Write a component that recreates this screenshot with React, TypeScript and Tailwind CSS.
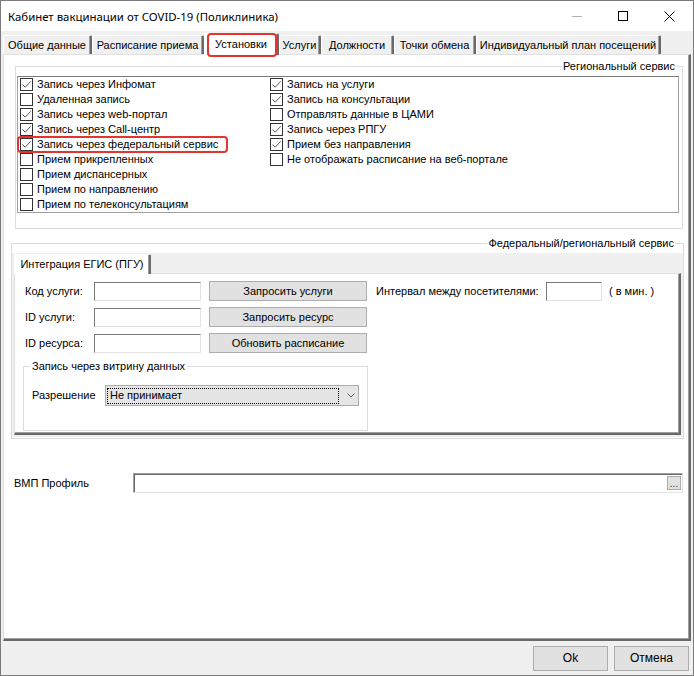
import React from 'react';

type Item = { label: string; checked: boolean; marked?: boolean };

const leftItems: Item[] = [
  { label: 'Запись через Инфомат', checked: true },
  { label: 'Удаленная запись', checked: false },
  { label: 'Запись через web-портал', checked: true },
  { label: 'Запись через Call-центр', checked: true },
  { label: 'Запись через федеральный сервис', checked: true, marked: true },
  { label: 'Прием прикрепленных', checked: false },
  { label: 'Прием диспансерных', checked: false },
  { label: 'Прием по направлению', checked: false },
  { label: 'Прием по телеконсультациям', checked: false },
];

const rightItems: Item[] = [
  { label: 'Запись на услуги', checked: true },
  { label: 'Запись на консультации', checked: true },
  { label: 'Отправлять данные в ЦАМИ', checked: false },
  { label: 'Запись через РПГУ', checked: true },
  { label: 'Прием без направления', checked: true },
  { label: 'Не отображать расписание на веб-портале', checked: false },
];

const tabs = [
  { label: 'Общие данные', width: 'w-[89px]' },
  { label: 'Расписание приема', width: 'w-[112px]' },
  { label: 'Установки', width: 'w-[75px]', active: true },
  { label: 'Услуги', width: 'w-[42px]' },
  { label: 'Должности', width: 'w-[73px]' },
  { label: 'Точки обмена', width: 'w-[82px]' },
  { label: 'Индивидуальный план посещений', width: 'w-[185px]' },
];

const CheckBox: React.FC<{ checked: boolean }> = ({ checked }) => (
  <span className="flex h-[13px] w-[13px] shrink-0 items-center justify-center border border-[#333333] bg-white">
    {checked && (
      <svg width="11" height="11" viewBox="0 0 11 11">
        <path d="M1.5 5.5 L4.2 8.2 L9.8 2.3" fill="none" stroke="#5a5a5a" strokeWidth="1" />
      </svg>
    )}
  </span>
);

const CheckRow: React.FC<{ item: Item }> = ({ item }) => (
  <div className="relative flex h-[15px] items-center gap-[4px]">
    <CheckBox checked={item.checked} />
    <span className="whitespace-nowrap">{item.label}</span>
    {item.marked && (
      <span className="pointer-events-none absolute -left-[3px] -top-[1px] h-[17px] w-[211px] rounded-[4px] border-2 border-[#e3342f]" />
    )}
  </div>
);

const TextBox: React.FC<{ className?: string }> = ({ className }) => (
  <input
    type="text"
    readOnly
    className={`h-[19px] border border-b-[#e3e3e3] border-l-[#7a7a7a] border-r-[#e3e3e3] border-t-[#7a7a7a] bg-white outline-none ${className ?? ''}`}
  />
);

const WinButton: React.FC<{ label: string; className?: string }> = ({ label, className }) => (
  <button
    type="button"
    className={`flex items-center justify-center border border-[#adadad] bg-[#e1e1e1] text-black ${className ?? ''}`}
  >
    {label}
  </button>
);

export default function App() {
  return (
    <div className="flex h-[676px] w-[694px] flex-col border border-[#7a7a7a] bg-[#f0f0f0] font-['Liberation_Sans',Arial,sans-serif] text-[11px] leading-[13px] text-black">
      {/* Заголовок окна */}
      <div className="flex h-[30px] shrink-0 items-center bg-white pl-[7px] pr-[1px]">
        <span className="font-['Noto_Sans',sans-serif] text-[11.4px]">Кабинет вакцинации от COVID-19 (Поликлиника)</span>
        <div className="ml-auto flex h-full">
          <div className="flex w-[46px] items-center justify-center">
            <svg width="10" height="10" viewBox="0 0 10 10">
              <path d="M0 5.5 H10" stroke="#b0b0b0" strokeWidth="1" />
            </svg>
          </div>
          <div className="flex w-[46px] items-center justify-center">
            <svg width="10" height="10" viewBox="0 0 10 10">
              <rect x="0.5" y="0.5" width="9" height="9" fill="none" stroke="#000" strokeWidth="1" />
            </svg>
          </div>
          <div className="flex w-[46px] items-center justify-center">
            <svg width="11" height="11" viewBox="0 0 11 11">
              <path d="M0.5 0.5 L10.5 10.5 M10.5 0.5 L0.5 10.5" stroke="#000" strokeWidth="1" />
            </svg>
          </div>
        </div>
      </div>

      <div className="flex flex-1 flex-col px-[2px] pt-[2px]">
        {/* Вкладки */}
        <div className="flex h-[21px] items-end">
          {tabs.map(t =>
            t.active ? (
              <div
                key={t.label}
                className={`relative z-10 -mb-[1px] flex h-[22px] items-center justify-center rounded-t-[2px] border-l border-r-2 border-t border-l-white border-r-[#696969] border-t-white bg-white shadow-[inset_-1px_0_0_#a0a0a0] ${t.width}`}
              >
                {t.label}
                <span className="pointer-events-none absolute -bottom-[2px] left-[2px] right-0 -top-[1px] rounded-[4px] border-2 border-[#e3342f]" />
              </div>
            ) : (
              <div
                key={t.label}
                className={`flex h-[19px] items-center justify-center rounded-t-[2px] border-l border-r-2 border-t border-l-white border-r-[#696969] border-t-white bg-[#f0f0f0] shadow-[inset_-1px_0_0_#a0a0a0] ${t.width}`}
              >
                {t.label}
              </div>
            )
          )}
        </div>

        {/* Страница «Установки» */}
        <div className="flex flex-1 flex-col border-b-2 border-l border-r-2 border-t border-b-[#696969] border-l-[#e0e0e0] border-r-[#696969] border-t-[#e0e0e0] bg-white shadow-[inset_-1px_-1px_0_#a0a0a0]">
          <fieldset className="ml-[11px] mr-[6px] mt-[5px] border border-[#dcdcdc] px-0 pb-[15px]">
            <legend className="ml-auto mr-[6px] px-[1px] leading-[13px]">Региональный сервис</legend>
            <div className="ml-[1px] mr-[3px] mt-[3px] flex border border-[#a0a0a0] border-t-[#7a7a7a] pl-[2px]">
              <div className="flex w-[250px] flex-col">
                {leftItems.map(i => (
                  <CheckRow key={i.label} item={i} />
                ))}
              </div>
              <div className="flex flex-col">
                {rightItems.map(i => (
                  <CheckRow key={i.label} item={i} />
                ))}
              </div>
            </div>
          </fieldset>

          <fieldset className="ml-[7px] mr-[5px] mt-[8px] border border-[#dcdcdc] pb-[1px]">
            <legend className="ml-auto mr-[8px] px-[1px] leading-[13px]">Федеральный/региональный сервис</legend>
            <div className="mt-[3px] flex flex-col bg-[#f0f0f0] pb-[2px]">
              <div className="flex h-[20px] items-end pl-[2px]">
                <div className="relative z-10 -mb-[1px] flex h-[20px] w-[137px] items-center justify-center rounded-t-[2px] border-l border-r-2 border-t border-l-white border-r-[#696969] border-t-white bg-white shadow-[inset_-1px_0_0_#a0a0a0]">
                  Интеграция ЕГИС (ПГУ)
                </div>
              </div>
              <div className="mx-[2px] flex flex-col border-b-2 border-l border-r-2 border-t border-b-[#696969] border-l-[#e0e0e0] border-r-[#696969] border-t-[#e0e0e0] bg-white pb-[2px] pl-[8px] pt-[7px] shadow-[inset_-1px_-1px_0_#a0a0a0]">
                <div className="flex flex-col gap-[6px] pl-[2px]">
                  <div className="flex h-[20px] items-center">
                    <span className="w-[69px]">Код услуги:</span>
                    <TextBox className="w-[107px]" />
                    <WinButton label="Запросить услуги" className="ml-[8px] h-[20px] w-[158px]" />
                    <span className="ml-[9px] w-[170px] whitespace-nowrap">Интервал между посетителями:</span>
                    <TextBox className="w-[56px]" />
                    <span className="ml-[7px]">( в мин. )</span>
                  </div>
                  <div className="flex h-[20px] items-center">
                    <span className="w-[69px]">ID услуги:</span>
                    <TextBox className="w-[107px]" />
                    <WinButton label="Запросить ресурс" className="ml-[8px] h-[20px] w-[158px]" />
                  </div>
                  <div className="flex h-[20px] items-center">
                    <span className="w-[69px]">ID ресурса:</span>
                    <TextBox className="w-[107px]" />
                    <WinButton label="Обновить расписание" className="ml-[8px] h-[20px] w-[158px]" />
                  </div>
                </div>

                <fieldset className="mt-[7px] w-[345px] border border-[#dcdcdc] pb-[24px] pl-[8px]">
                  <legend className="ml-[-2px] px-[2px] leading-[13px]">Запись через витрину данных</legend>
                  <div className="mt-[12px] flex items-center">
                    <span className="w-[73px]">Разрешение</span>
                    <div className="flex h-[21px] w-[254px] items-center border border-[#acacac] bg-[#e5e5e5] pl-[1px]">
                      <div className="flex h-[16px] w-[232px] items-center border border-dotted border-black pl-[2px]">
                        Не принимает
                      </div>
                      <svg className="ml-[8px]" width="8" height="5" viewBox="0 0 8 5">
                        <path d="M0.5 0.5 L4 4 L7.5 0.5" fill="none" stroke="#606060" strokeWidth="1" />
                      </svg>
                    </div>
                  </div>
                </fieldset>
              </div>
            </div>
          </fieldset>

          <div className="mt-[34px] flex h-[20px] items-center pl-[10px] pr-[6px]">
            <span className="w-[119px]">ВМП Профиль</span>
            <div className="flex h-[20px] flex-1 items-center justify-end border-b border-l border-r border-t border-b-[#e3e3e3] border-l-[#a0a0a0] border-r-[#e3e3e3] border-t-[#a0a0a0] bg-white pr-[1px] shadow-[inset_1px_1px_0_#696969]">
              <div className="flex h-[14px] w-[14px] items-end justify-center border border-[#adadad] bg-[#e1e1e1] text-[10px] leading-[10px] text-[#333]">
                ...
              </div>
            </div>
          </div>
        </div>

        {/* Кнопки */}
        <div className="mt-[5px] flex justify-end gap-[6px] pb-[4px] pr-[2px]">
          <WinButton label="Ok" className="h-[25px] w-[75px] text-[12px]" />
          <WinButton label="Отмена" className="h-[25px] w-[75px] text-[12px]" />
        </div>
      </div>
    </div>
  );
}
